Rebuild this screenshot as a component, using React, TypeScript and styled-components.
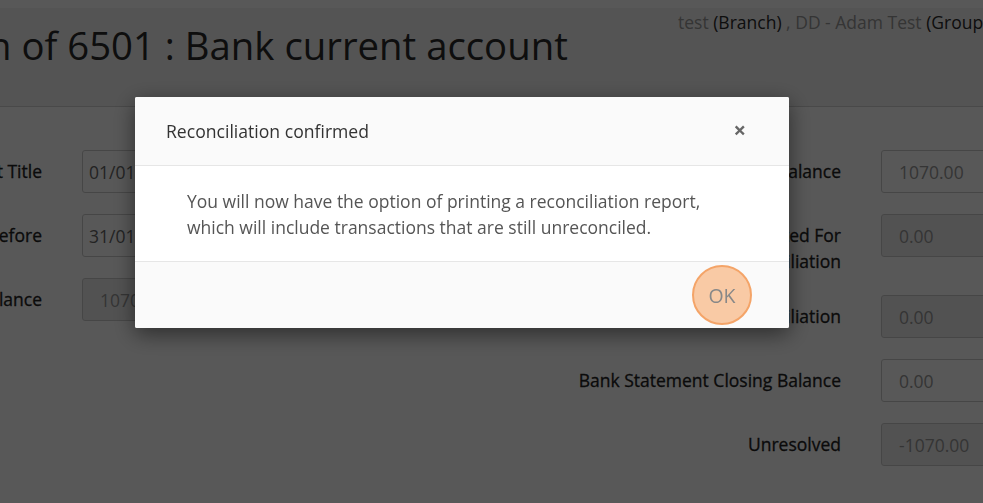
import React from 'react'
import styled, { createGlobalStyle } from 'styled-components'

const GlobalStyle = createGlobalStyle`
  html, body {
    margin: 0;
    padding: 0;
    overflow: hidden;
  }
  body {
    font-family: "Open Sans", "Liberation Sans", sans-serif;
    background: #fff;
    color: #333;
  }
`

// page behind the dialog, scrolled a little to the right
const Page = styled.div`
  width: 1400px;
  height: 503px;
  margin-left: -252px;
  background: #fff;
`

const TopStrip = styled.div`
  height: 8px;
  background: #fff;
`

const Header = styled.header`
  display: grid;
  grid-template-columns: 915px auto;
  align-items: start;
  height: 98px;
  padding: 0 15px;
  background: #f3f3f3;
  border-bottom: 1px solid #d2d2d2;
`

const PageTitle = styled.h1`
  margin: 16px 0 0;
  font-size: 38.3px;
  line-height: 42px;
  font-weight: 400;
  color: #2a2a2a;
  white-space: nowrap;
`

const UserInfo = styled.div`
  margin-top: 2px;
  font-size: 17.5px;
  line-height: 24px;
  white-space: nowrap;
  color: #999;

  b {
    font-weight: 400;
    color: #2a2a2a;
  }
`

const Form = styled.div`
  display: grid;
  grid-template-columns: 569px 520px;
  column-gap: 189px;
  align-items: start;
  padding: 43px 15px 0;
`

const FormColumn = styled.div<{ $label: number; $input: number }>`
  display: grid;
  grid-template-columns: ${(p) => p.$label}px ${(p) => p.$input}px;
  align-content: start;
  align-items: start;
  column-gap: 40px;
  row-gap: 21px;
`

const Label = styled.label`
  padding-top: 8px;
  font-size: 17.5px;
  line-height: 26px;
  font-weight: 400;
  text-align: right;
  color: #222;
  -webkit-text-stroke: 0.3px #222;
`

const Field = styled.input<{ $disabled?: boolean; $compact?: boolean }>`
  box-sizing: border-box;
  width: 100%;
  height: 43px;
  padding: 0 ${(p) => (p.$compact ? '6px' : '17px')};
  border: 1px solid #ccc;
  border-radius: 3px;
  background: ${(p) => (p.$disabled ? '#eee' : '#fff')};
  font-family: "Open Sans", "Liberation Sans", sans-serif;
  font-size: 17.5px;
  color: ${(p) => (p.$compact ? '#666' : '#999')};
  outline: none;
`

// modal
const Overlay = styled.div`
  position: fixed;
  inset: 0;
  box-sizing: border-box;
  padding: 97px 0 0 135px;
  background: rgba(0, 0, 0, 0.655);
`

const Dialog = styled.div`
  width: 654px;
  background: #fff;
  border-radius: 2px;
  overflow: hidden;
  box-shadow: 0 6px 22px rgba(0, 0, 0, 0.5);
`

const DialogHeader = styled.div`
  display: flex;
  align-items: center;
  justify-content: space-between;
  height: 68px;
  padding: 0 43px 0 31px;
  background: #fafafa;
  border-bottom: 1px solid #e6e6e6;
`

const DialogTitle = styled.h4`
  margin: 0;
  font-size: 17.6px;
  font-weight: 400;
  color: #333;
`

const CloseButton = styled.button`
  margin-top: -5px;
  padding: 0;
  border: 0;
  background: none;
  font-family: "Open Sans", "Liberation Sans", sans-serif;
  font-size: 22px;
  font-weight: 700;
  line-height: 1;
  color: #666;
  cursor: pointer;
`

const DialogBody = styled.div`
  padding: 22px 31px 21px 52px;
  font-size: 17.5px;
  line-height: 26px;
  color: #555;
`

const DialogFooter = styled.div`
  display: flex;
  align-items: center;
  justify-content: flex-end;
  height: 66px;
  padding-right: 37px;
  background: #fafafa;
  border-top: 1px solid #e6e6e6;
`

const OkButton = styled.button`
  box-sizing: border-box;
  width: 60px;
  height: 60px;
  padding: 0;
  border: 2px solid #f4a468;
  border-radius: 50%;
  background: #f9caa5;
  font-family: "Open Sans", "Liberation Sans", sans-serif;
  font-size: 19.5px;
  color: #888;
  cursor: pointer;
`

const App = (): JSX.Element => {
  return (
    <>
      <GlobalStyle />
      <Page>
        <TopStrip />
        <Header>
          <PageTitle>Reconciliation of 6501 : Bank current account</PageTitle>
          <UserInfo>
            test <b>(Branch)</b> , DD - Adam Test <b>(Group)</b>
          </UserInfo>
        </Header>
        <Form>
          <FormColumn $label={279} $input={250}>
            <Label>Statement Title</Label>
            <Field $compact readOnly value="01/01/2020 - 31/01/2020" />
            <Label>Reconcile Before</Label>
            <Field $compact readOnly value="31/01/2020" />
            <Label>Ledger Balance</Label>
            <Field $disabled readOnly value="1070.00" />
          </FormColumn>
          <FormColumn $label={320} $input={200}>
            <Label>Cashbook Balance</Label>
            <Field readOnly value="1070.00" />
            <Label>
              Total Selected For
              <br />
              Reconciliation
            </Label>
            <Field $disabled readOnly value="0.00" />
            <Label>Balance After Reconciliation</Label>
            <Field $disabled readOnly value="0.00" />
            <Label>Bank Statement Closing Balance</Label>
            <Field readOnly value="0.00" />
            <Label>Unresolved</Label>
            <Field $disabled readOnly value="-1070.00" />
          </FormColumn>
        </Form>
      </Page>
      <Overlay>
        <Dialog>
          <DialogHeader>
            <DialogTitle>Reconciliation confirmed</DialogTitle>
            <CloseButton aria-label="Close">×</CloseButton>
          </DialogHeader>
          <DialogBody>
            You will now have the option of printing a reconciliation report,
            <br />
            which will include transactions that are still unreconciled.
          </DialogBody>
          <DialogFooter>
            <OkButton>OK</OkButton>
          </DialogFooter>
        </Dialog>
      </Overlay>
    </>
  )
}

export default App
